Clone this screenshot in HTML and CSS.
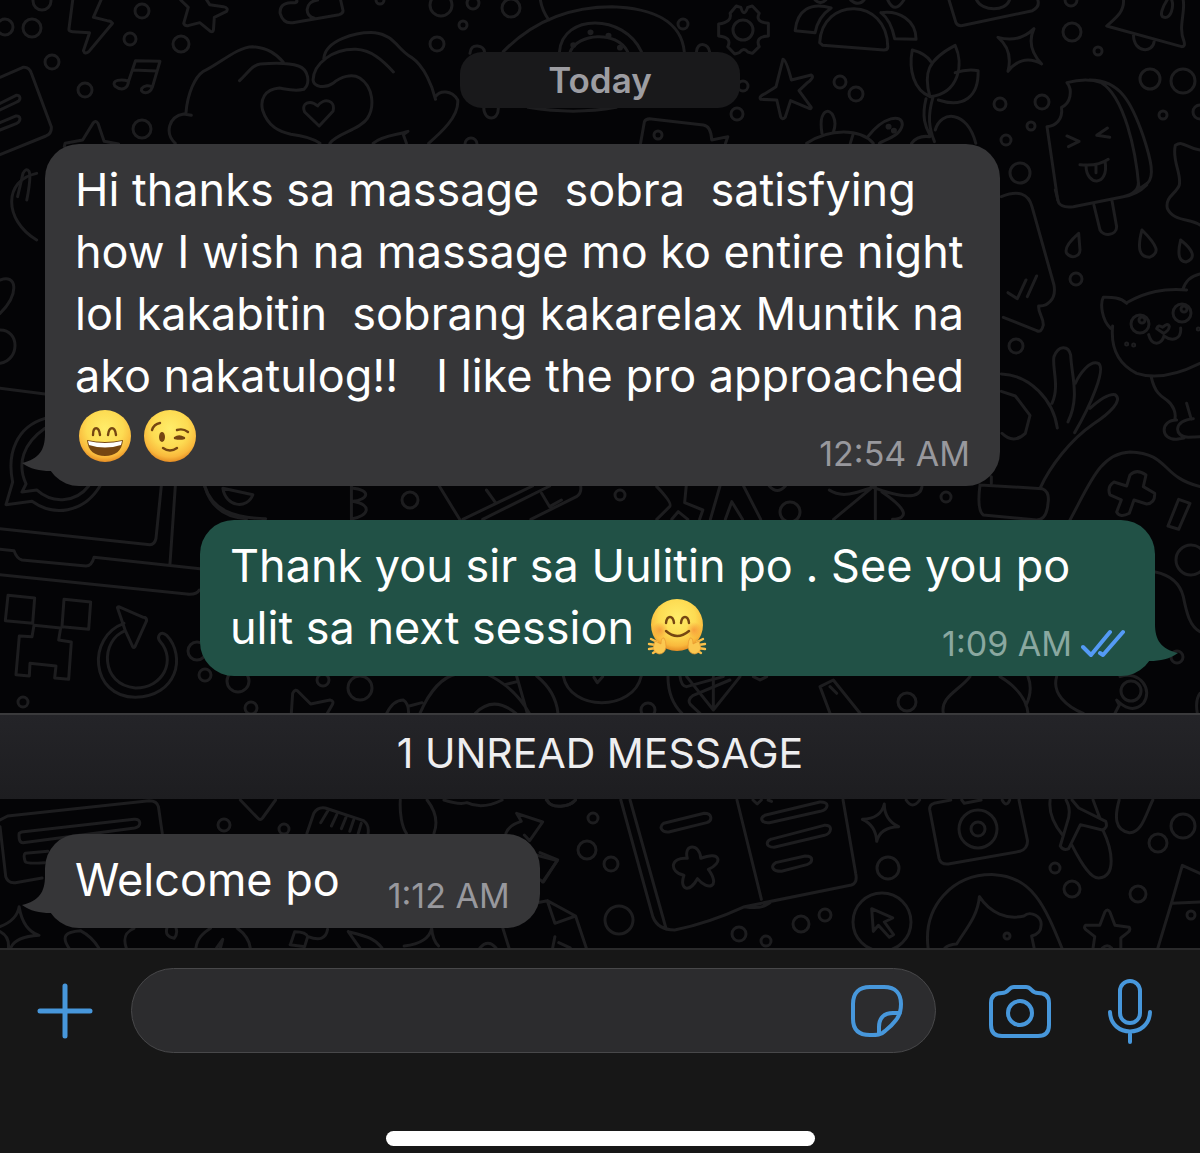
FILE: index.html
```html
<!DOCTYPE html>
<html lang="fil">
<head>
<meta charset="utf-8">
<meta name="viewport" content="width=device-width, initial-scale=1">
<title>Chat</title>
<link rel="stylesheet" href="styles.css">
</head>
<body>
<main class="chat">
  <svg class="wallpaper" viewBox="0 0 1200 948" preserveAspectRatio="xMidYMin slice" aria-hidden="true">
    <!-- bubbles scattered between the drawings -->
    <g>
      <circle cx="42" cy="1" r="9"/><circle cx="5" cy="27" r="8"/><circle cx="32" cy="28" r="9"/><circle cx="142" cy="11" r="7"/><circle cx="130" cy="39" r="6"/><circle cx="181" cy="44" r="8"/><circle cx="52" cy="62" r="7"/><circle cx="85" cy="90" r="7"/><circle cx="142" cy="129" r="9"/><circle cx="380" cy="0" r="4"/><circle cx="441" cy="5" r="11"/><circle cx="473" cy="3" r="6"/><circle cx="511" cy="8" r="9"/><circle cx="463" cy="25" r="4"/><circle cx="437" cy="44" r="7"/><circle cx="471" cy="144" r="6"/>
      <circle cx="683" cy="24" r="5"/><circle cx="743" cy="30" r="10"/><circle cx="743" cy="86" r="5"/><circle cx="737" cy="114" r="6"/><circle cx="840" cy="82" r="6"/><circle cx="856" cy="94" r="7"/><circle cx="658" cy="135" r="4"/><circle cx="1071" cy="0" r="6"/><circle cx="1072" cy="32" r="9"/><circle cx="1098" cy="51" r="4"/><circle cx="1150" cy="79" r="10"/><circle cx="1183" cy="81" r="12"/><circle cx="1000" cy="104" r="6"/><circle cx="1042" cy="102" r="7"/><circle cx="1031" cy="126" r="4"/><circle cx="1006" cy="140" r="5"/><circle cx="1163" cy="115" r="4"/><circle cx="1020" cy="173" r="10"/><circle cx="1200" cy="112" r="7"/>
      <circle cx="1076" cy="279" r="6"/><circle cx="1016" cy="346" r="7"/><circle cx="1140" cy="324" r="9"/><circle cx="1182" cy="313" r="9"/><circle cx="1142" cy="320" r="3"/><circle cx="1184" cy="309" r="3"/>
      <circle cx="23" cy="702" r="5"/><circle cx="197" cy="651" r="9"/><circle cx="205" cy="675" r="6"/><circle cx="238" cy="681" r="11"/><circle cx="251" cy="708" r="6"/><circle cx="323" cy="680" r="6"/><circle cx="360" cy="688" r="12"/><circle cx="648" cy="710" r="7"/>
      <circle cx="410" cy="500" r="8"/><circle cx="620" cy="495" r="5"/><circle cx="790" cy="512" r="10"/><circle cx="946" cy="497" r="5"/><circle cx="1191" cy="560" r="15"/><circle cx="1131" cy="691" r="10"/><circle cx="1177" cy="657" r="6"/><circle cx="907" cy="702" r="9"/>
      <circle cx="224" cy="825" r="6"/><circle cx="284" cy="829" r="5"/><circle cx="593" cy="818" r="5"/><circle cx="587" cy="850" r="9"/><circle cx="611" cy="864" r="7"/><circle cx="619" cy="920" r="14"/><circle cx="739" cy="934" r="7"/><circle cx="766" cy="941" r="5"/><circle cx="801" cy="924" r="8"/><circle cx="825" cy="915" r="6"/><circle cx="888" cy="868" r="11"/><circle cx="882" cy="922" r="29"/><circle cx="978" cy="829" r="19"/><circle cx="978" cy="829" r="7"/><circle cx="1055" cy="868" r="5"/><circle cx="1072" cy="889" r="8"/><circle cx="1138" cy="894" r="8"/><circle cx="1158" cy="843" r="9"/><circle cx="1183" cy="826" r="12"/><circle cx="1007" cy="936" r="3"/><circle cx="1191" cy="915" r="4"/>
    </g>
    <!-- bolt, star, notes, hands with heart, saucer -->
    <g transform="scale(.3827 .3333)">
      <path d="M190 0L180 88Q180 95 190 95L234 98L218 152Q222 165 232 155L294 70Q290 62 280 62L244 52L264 0"/>
      <path d="M472 0L492 22L480 70Q484 80 494 76L522 68L550 94Q558 98 558 86L560 52L592 34Q598 24 584 20L548 14L540 0"/>
      <path d="M775 0Q780 10 760 8Q730 10 732 40Q740 72 765 68L886 44Q898 40 896 30L890 0M830 0C795 5 795 50 822 55"/>
      <path d="M336 244C318 236 290 240 300 258C320 276 334 264 336 244L354 182L418 184L398 262C390 286 366 280 370 266C376 256 390 254 398 262M346 210L410 213"/>
      <path d="M0 232L60 202Q76 200 82 220L134 380Q136 400 120 408L0 464M0 310L42 286C54 284 56 300 44 306L0 330M0 368L42 348C54 346 56 362 44 370L0 390M168 440L170 430L216 420L244 368Q250 360 256 370L272 424L310 432M46 590L60 520Q68 502 76 514Q82 530 70 600"/>
      <path d="M458 430C430 400 440 350 480 342L500 346M486 338C490 280 510 230 530 215C570 195 620 140 660 140C700 144 720 160 740 186M626 242C650 215 660 195 680 192C720 188 760 190 780 198C806 208 812 250 794 268C770 275 750 268 730 264C690 268 680 300 686 330C700 380 730 395 760 403Q810 410 836 430M846 176C850 120 930 95 980 98C1030 105 1040 150 1075 172C1110 200 1130 260 1138 298M1138 290C1150 270 1180 270 1196 300C1200 350 1150 400 1120 430M1028 216C1000 180 970 150 930 148C870 146 820 190 818 240C820 262 850 266 870 250C890 230 920 220 940 234C975 260 980 320 960 355C940 390 880 400 862 430M975 430C1000 405 1040 405 1066 394L1054 404L1062 430M834 378L796 336C786 310 810 298 830 318C846 292 878 300 870 334Z"/>
      <path d="M1315 155C1370 90 1460 20 1600 20C1700 24 1780 60 1788 155M1412 0Q1416 30 1434 60M1462 155C1470 40 1630 40 1676 155M1490 155C1510 100 1610 90 1640 155M1228 160Q1230 136 1248 138Q1264 140 1266 155M1820 155Q1822 132 1838 134Q1852 138 1854 155M1264 322C1264 365 1304 365 1302 322M1380 322Q1500 345 1610 322"/>
      <circle cx="1498" cy="135" r="4"/><circle cx="1543" cy="97" r="4"/><circle cx="1590" cy="107" r="4"/><circle cx="1620" cy="143" r="4"/>
    </g>
    <!-- cog, sunrise, starfish, tulip, sparkle, bell, ice lolly -->
    <g transform="translate(600 0) scale(.3827 .3333)">
      <path d="M340 40L356 18L368 22Q376 54 386 22L398 18L416 40Q404 66 440 70V108Q404 110 416 140L398 160L386 156Q376 140 364 158L352 162L334 140Q346 112 310 108V72Q346 66 340 40Z"/>
      <path d="M574 128C580 -10 750 -10 752 140Q752 150 742 150L582 136ZM510 92C515 30 550 5 604 24Q570 50 562 98ZM734 38C780 30 826 60 826 118L770 116Q760 60 734 38M562 0Q576 16 590 0M655 0Q675 20 690 0M752 0Q770 44 794 0"/>
      <path d="M478 178Q486 178 500 240L552 225Q562 232 540 250L520 272L552 322Q552 330 540 322L498 302L484 352Q476 362 472 350L462 300L420 298Q414 290 430 282L460 260Z"/>
      <path d="M862 290C820 270 806 210 816 150Q850 160 864 184M862 290C845 220 855 180 928 136C950 190 940 280 862 290M928 218Q960 206 988 212C990 290 950 325 884 300M852 296C840 350 850 380 862 405M870 292C855 350 860 385 874 425M876 390C890 330 960 330 982 430M814 430Q830 405 862 410"/>
      <path d="M1040 112Q1094 130 1134 86Q1112 140 1154 192Q1104 160 1066 214Q1080 150 1040 112Z"/>
      <path d="M1368 0C1370 40 1340 60 1324 78L1520 140Q1530 140 1526 124C1510 80 1530 40 1524 0M1482 0C1470 20 1460 50 1474 52C1492 56 1500 20 1494 0M1394 106C1395 160 1445 160 1448 124M912 0L930 68Q935 80 950 76L1130 32Q1150 20 1144 0M984 0C1000 35 1060 35 1070 0"/>
      <path d="M106 430L116 365Q120 355 134 357L270 375Q290 378 292 420L334 410L328 430M580 400C570 330 600 320 610 350Q618 370 610 396M700 410C740 350 790 340 790 374C785 410 740 420 730 430M540 430C600 385 680 385 714 430M662 400L654 430"/>
      <path d="M1196 600L1168 380C1190 378 1210 360 1206 322C1230 310 1236 270 1220 248C1260 236 1290 240 1310 248C1370 290 1400 450 1408 560M1280 240C1360 240 1390 310 1420 410C1440 480 1450 530 1430 550L1408 568M1220 408L1252 424L1224 440M1326 384L1298 406L1332 412M1254 494Q1300 500 1328 478M1270 496C1270 560 1330 560 1320 486M1296 496V518"/>
      <circle cx="754" cy="380" r="4"/><circle cx="768" cy="392" r="4"/>
    </g>
    <!-- lolly stick, drops, kitten, hand, gamepad -->
    <g transform="translate(980 100) scale(.3333)">
      <path d="M226 270L236 308Q244 324 280 320L430 290Q475 280 475 250M430 290Q470 285 500 255M342 316L360 390C370 410 410 408 410 380L396 302M296 400Q250 440 260 460C275 478 300 470 300 450ZM486 390C470 450 480 470 508 472C540 460 536 440 486 390M602 420C590 470 600 484 618 486C650 475 640 450 602 420M660 150C620 145 610 120 586 136C575 180 605 220 598 255C590 280 555 290 562 325C580 365 630 355 660 375"/>
      <path d="M64 290Q140 260 156 320L222 555C230 600 200 620 176 618C174 640 190 650 190 675Q184 700 170 692L70 652M84 578L112 596L138 540M170 528L142 590"/>
      <path d="M444 606C500 575 550 565 620 570M608 570Q620 530 660 522M440 610C420 590 390 592 370 592C360 610 365 660 392 685M398 678C390 760 430 800 470 820C530 840 600 820 660 790M530 686Q534 672 548 682Q564 666 568 680Q566 694 550 700ZM506 704C515 740 545 735 552 708C575 725 605 720 602 684M514 832C525 880 545 890 560 900C580 915 590 940 584 960M620 910L634 958M590 960C540 960 540 1020 590 1018L612 1014M640 956C580 960 580 1010 625 1012L660 1010"/>
      <path d="M64 822C150 825 220 900 232 984M216 910C240 860 215 800 222 770C235 735 265 735 272 765C275 830 300 890 264 966M286 850C300 820 330 780 355 790C380 805 330 920 284 998M330 925Q380 880 405 884C430 900 390 940 340 972C270 1020 210 1100 180 1165M64 874L106 888L150 946L136 1000Q100 1034 66 1000M34 1130V1150M0 1155L186 1166Q210 1175 204 1210Q200 1260 170 1260L10 1245Q-10 1230 0 1155"/>
      <path d="M270 1260C330 1150 360 1060 450 1056C570 1060 540 1130 660 1160M450 1125Q470 1105 498 1125L490 1160L524 1180Q526 1210 500 1212L462 1200L448 1240Q420 1255 410 1236L424 1200L390 1185Q380 1160 402 1146L440 1158ZM596 1198L630 1210L596 1288L564 1278Z"/>
      <circle cx="440" cy="732" r="3"/><circle cx="461" cy="735" r="3"/><circle cx="655" cy="687" r="3"/>
    </g>
    <!-- laptop, pixel face, reload arrow -->
    <g transform="translate(0 380) scale(.3333)">
      <path d="M0 25L135 42M135 115C50 140 20 220 38 306L18 374L96 364C160 410 250 400 300 318M135 145C70 190 50 250 78 312L66 336L110 330C160 375 230 365 266 318M484 318L468 475Q464 494 450 494L0 446M526 318L510 552M0 508L42 512Q50 536 66 540L258 558Q275 558 282 532L600 566M0 584L560 642Q590 645 598 630M614 318Q640 410 740 416"/>
      <path d="M24 646L104 654L98 730L16 722ZM192 658L272 666L266 748L186 740ZM102 736L182 744L176 780L214 786L206 898L164 894L168 858L90 850L88 888L48 884L58 768L96 770Z"/>
      <path d="M376 752L398 800Q402 806 406 798L440 722Q440 712 430 712L356 680Q350 680 354 688L376 752M372 730C260 770 270 950 406 952C530 950 560 830 500 766C480 750 470 770 480 784C530 840 490 925 406 924C300 915 300 780 376 752"/>
      <path d="M110 -620C10 -600 10 -480 110 -420M0 -300C50 -320 60 -260 0 -200M0 -150C60 -150 60 -60 0 -50"/>
    </g>
    <!-- between the two large messages -->
    <g transform="translate(180 460) scale(.5357 .3333)">
      <path d="M80 85L136 104C125 150 85 140 80 85M46 78C60 150 100 175 160 176M320 78V178M320 84C360 90 350 120 322 124C362 134 350 170 322 176M484 78L522 178M528 178L658 78M565 178L690 78M572 90L590 130M675 100L690 140L712 120M655 178L740 110Q750 100 748 78M890 80Q920 130 914 140L890 178M945 78L942 128L976 150L970 178M918 178L930 155L948 178M1008 78L990 178M1052 78L1084 178M1018 178L1030 125L1050 178M1100 78Q1115 105 1130 78M1212 90C1240 120 1270 90 1290 85L1220 178M1298 78V178M1290 80Q1380 135 1385 80M1310 95C1360 150 1360 175 1330 178"/>
    </g>
    <g transform="translate(900 480) scale(.3333)">
      <path d="M766 276C810 285 840 310 850 350C860 400 870 440 900 455M130 700C120 650 180 630 210 590M300 590C350 620 380 660 384 700M384 590Q400 630 378 676M470 590C455 640 500 680 550 700M660 590C720 570 760 630 730 670C700 700 670 680 650 660L658 675L645 700M900 640Q885 660 892 700"/>
      <path d="M-640 590L-560 690L-480 590M-560 590V690M-440 590L-420 600L-400 590M-240 620L-200 600L-120 700M-240 620L-210 700M-210 620L-190 640"/>
    </g>
    <!-- star, gauge, wheel above the divider -->
    <g transform="translate(190 670) scale(.3333)">
      <path d="M304 130L308 70Q316 54 326 66L362 102L420 90Q434 92 426 106L412 130M590 130Q610 90 640 90Q656 100 656 130M658 108L696 98M690 130C720 60 760 20 800 12M890 12C950 40 990 80 1018 130M980 18L1012 130M945 44L985 34M1040 18C1080 50 1100 90 1104 130M856 130Q910 75 978 130M1120 18C1140 125 1330 125 1354 18M1212 22L1222 38L1238 20M1434 18C1434 70 1450 105 1476 130M1470 18Q1474 50 1490 50L1600 20M1620 30L1510 76Q1490 90 1502 104L1530 130"/>
    </g>
    <!-- card, comb, ribbon, arrows, paper -->
    <g transform="translate(0 790) scale(.3827 .3333)">
      <path d="M0 90L20 78L390 32Q410 32 414 50L424 130M0 110L15 260Q20 280 40 278L110 264M56 126L350 88C370 85 370 110 352 114L60 158Q48 158 50 130ZM125 184L66 190Q60 195 66 215Q70 222 116 218M628 30L674 85Q680 92 686 84L720 30M802 130L820 70Q830 50 850 54L950 92Q965 105 962 130M856 64L838 98M880 74L866 108M904 82L892 116M924 90L914 124M944 100L936 130M1046 30C1044 70 1050 110 1062 130M1116 30Q1150 80 1134 130M1160 30Q1200 45 1220 38Q1260 60 1312 30M1430 30C1440 60 1490 50 1504 30M1322 130Q1330 105 1362 94L1350 70L1418 96L1384 152L1370 135M1400 195L1456 212L1420 276L1400 262"/>
      <path d="M0 410Q45 390 50 350Q60 420 102 436Q40 440 28 474M0 425Q25 440 22 474M180 474C160 440 170 425 210 422Q240 440 258 474M330 474C320 440 330 425 350 415M436 415Q430 440 455 445Q465 430 460 415M512 474C515 445 530 430 550 415M620 415Q650 440 654 474M566 474L582 448L576 474M760 460L770 425Q800 425 804 440L796 470L758 464M805 440Q850 460 856 418M910 425L940 474M910 425C960 440 980 445 998 474M1056 468Q1120 460 1128 415Q1130 450 1146 468M1254 474Q1275 445 1296 474M1314 415L1330 474M1404 338L1430 332L1504 378L1532 474M1430 332L1450 400L1504 378M1450 440L1444 474M1460 458L1490 474"/>
    </g>
    <!-- notebook, camera, carrot, girl, star -->
    <g transform="translate(540 790) scale(.4209 .3333)">
      <path d="M192 30L268 380Q280 420 320 420Q400 400 486 350L740 285Q755 278 750 250L720 30M214 30L300 418M468 30L526 328M486 350Q530 360 550 334M294 100L390 70C410 70 410 92 396 98L306 126C288 128 282 110 294 100M534 76L665 36C690 35 685 58 666 64L545 98C525 100 522 84 534 76M548 148L675 106C698 104 692 130 676 136L556 172C534 170 538 154 548 148M560 218L630 198C652 198 648 218 634 224L574 244C550 244 548 228 560 218M506 30L516 42L526 30M542 30L550 34"/>
      <path d="M350 205C340 160 380 160 382 205C430 180 435 220 400 238C430 290 400 305 374 266C355 310 330 300 342 256C305 245 310 200 350 205M818 42Q818 90 852 110Q808 112 800 154Q798 106 766 88Q810 86 818 42Z"/>
      <path d="M976 30L936 40Q924 45 926 60L948 205Q952 224 970 222L1140 184Q1160 176 1158 150L1138 30M1002 30L1008 40L1048 30M1098 30Q1108 54 1116 30M870 30Q885 60 902 30M1212 30C1208 70 1225 110 1242 136M1250 30Q1264 60 1252 100L1236 168Q1244 184 1256 176L1284 104L1336 120Q1350 114 1344 94L1280 54L1264 30M1314 30L1330 84M1264 166C1290 230 1310 266 1328 264C1370 260 1360 180 1338 122M1376 30C1365 80 1365 120 1400 128C1430 130 1440 70 1456 30M15 30C30 60 70 50 84 30"/>
      <path d="M788 356L838 384L818 396L840 434L830 442L804 406L792 424ZM922 474C910 350 980 250 1080 254C1170 260 1200 350 1240 474M1044 320C1040 380 1010 420 990 462Q970 464 962 474M1044 320C1070 370 1110 390 1150 378C1165 360 1195 380 1190 410Q1190 430 1168 438L1174 474M1342 366L1330 406L1296 406Q1290 414 1300 422L1318 440L1314 474M1354 366L1366 406L1400 412Q1404 420 1396 428L1380 444V474M1342 366Q1348 354 1354 366M1336 474Q1348 460 1358 474M1568 250L1526 226L1500 340L1468 474M1502 340L1568 336M0 188L42 210L6 276"/>
    </g>
  </svg>

  <p class="date">Today</p>

  <article class="bubble bubble-in bubble-long">
    <svg class="tail" viewBox="0 0 36 52" aria-hidden="true"><path d="M24 0C24 16 18 25 1 29C9 35 19 37 29 37L36 37V0Z"/></svg>
    <p class="text">Hi thanks sa massage&nbsp; sobra&nbsp; satisfying how I wish na massage mo ko entire night lol kakabitin&nbsp; sobrang kakarelax Muntik na ako nakatulog!!&nbsp;&nbsp; I like the pro approached <svg class="emoji" viewBox="0 0 60 60" role="img" aria-label="Grinning face with smiling eyes">
        <defs>
          <radialGradient id="face" cx=".5" cy=".36" r=".64"><stop offset="0" stop-color="#ffed6a"/><stop offset=".55" stop-color="#fddb52"/><stop offset=".85" stop-color="#f9b83c"/><stop offset="1" stop-color="#e58d24"/></radialGradient>
          <radialGradient id="blush"><stop offset="0" stop-color="#f58a35" stop-opacity=".7"/><stop offset="1" stop-color="#f58a35" stop-opacity="0"/></radialGradient>
        </defs>
        <circle cx="30" cy="30" r="26" fill="url(#face)"/>
        <path d="M18 29C18 20 24 20 25 29M33 29C34 20 40 20 41 29" fill="none" stroke="#754612" stroke-width="2.4" stroke-linecap="round"/>
        <path d="M12 34Q30 38 48 34C47 45 40 50 30 50C20 50 13 45 12 34Z" fill="#754612"/>
        <path d="M13 35Q30 39 47 35L46 39Q30 44 14 39Z" fill="#fff"/>
      </svg><svg class="emoji" viewBox="0 0 60 60" role="img" aria-label="Winking face">
        <circle cx="30" cy="30" r="26" fill="url(#face)"/>
        <path d="M12 24Q14 18 20 17M37 24Q43 22 48 26M35 32Q39 29 44 32M35 32Q40 33 44 32M23 42Q30 47 37 42" fill="none" stroke="#754612" stroke-width="2.4" stroke-linecap="round"/>
        <ellipse cx="22" cy="31" rx="3" ry="5" fill="#754612"/>
      </svg><time class="time">12:54 AM</time></p>
  </article>

  <article class="bubble bubble-out bubble-long">
    <p class="text">Thank you sir sa Uulitin po . See you po ulit sa next session <svg class="emoji" viewBox="0 0 60 60" role="img" aria-label="Hugging face">
        <circle cx="30" cy="29" r="26" fill="url(#face)"/>
        <circle cx="13" cy="34" r="8" fill="url(#blush)"/><circle cx="47" cy="34" r="8" fill="url(#blush)"/>
        <path d="M19 27C20 19 26 19 27 27M34 27C35 19 41 19 42 27M19 35Q30 45 42 35" fill="none" stroke="#754612" stroke-width="2.4" stroke-linecap="round"/>
        <path d="M4 43L10 46M2 48L9 49M2 53L9 52M6 57L11 54M56 43L50 46M58 48L51 49M58 53L51 52M54 57L49 54" stroke="#fbc04a" stroke-width="2.4" stroke-linecap="round"/>
        <path d="M8 45L14 48Q14 41 17 42Q19 44 19 51Q18 58 12 58Q7 57 6 52ZM52 45L46 48Q46 41 43 42Q41 44 41 51Q42 58 48 58Q53 57 54 52Z" fill="#fbc850" stroke="#e99a30" stroke-width=".7"/>
      </svg><span class="time"><time>1:09 AM</time><svg class="ticks" viewBox="0 0 44 30" role="img" aria-label="Read"><path d="M2 18L10 26L29 3M19 24L22 26L42 3"/></svg></span></p>
    <svg class="tail" viewBox="0 0 36 52" aria-hidden="true"><path d="M24 0C24 16 18 25 1 29C9 35 19 37 29 37L36 37V0Z"/></svg>
  </article>

  <h2 class="unread">1 UNREAD MESSAGE</h2>

  <article class="bubble bubble-in">
    <svg class="tail" viewBox="0 0 36 52" aria-hidden="true"><path d="M24 0C24 16 18 25 1 29C9 35 19 37 29 37L36 37V0Z"/></svg>
    <p class="text">Welcome po<time class="time">1:12 AM</time></p>
  </article>
</main>

<footer class="composer">
  <form class="bar">
    <button class="icon" type="button" aria-label="Add attachment"><svg width="56" height="56" viewBox="0 0 56 56"><path d="M28 3V53M3 28H53" stroke-width="5"/></svg></button>
    <div class="field">
      <input class="input" type="text" aria-label="Message">
      <button class="icon" type="button" aria-label="Stickers"><svg width="54" height="54" viewBox="0 0 54 54"><path d="M20 3H34C46 3 51 10 51 20C51 27 50 31 46 36C43 40 39 44 35 47C31 51 27 51 20 51C9 51 3 46 3 35V20C3 9 9 3 20 3ZM29 50V43C29 34 34 29 43 29H50"/></svg></button>
    </div>
    <button class="icon camera" type="button" aria-label="Camera"><svg width="64" height="56" viewBox="0 0 64 56"><path d="M26 4H38C44 4 43 10 50 10C57 10 61 13 61 20V42C61 50 57 53 50 53H14C7 53 3 50 3 42V20C3 13 7 10 14 10C21 10 20 4 26 4Z"/><circle cx="32" cy="30" r="12"/></svg></button>
    <button class="icon" type="button" aria-label="Voice message"><svg width="46" height="66" viewBox="0 0 46 66"><rect x="13" y="3" width="20" height="42" rx="10"/><path d="M3 34C4 60 42 60 43 34M23 54V64"/></svg></button>
  </form>
  <div class="home"></div>
</footer>
</body>
</html>
```
FILE: styles.css
```css
* {
  box-sizing: border-box;
}

body {
  margin: 0;
  min-height: 100vh;
  display: flex;
  flex-direction: column;
  background: #171717;
  color: #fff;
  font-family: Inter, "Liberation Sans", sans-serif;
}

p,
h2 {
  margin: 0;
}

.chat {
  position: relative;
  isolation: isolate;
  flex: 1;
  display: flex;
  flex-direction: column;
  align-items: flex-start;
  padding: 52px 0 20px;
  background: #040406;
  overflow: hidden;
}

.wallpaper {
  position: absolute;
  inset: 0;
  z-index: -1;
  width: 100%;
  height: 100%;
  fill: none;
  stroke: #1d1d1f;
  stroke-width: 3;
  stroke-linecap: round;
  stroke-linejoin: round;
}

.wallpaper * {
  vector-effect: non-scaling-stroke;
}

.date {
  align-self: center;
  padding: 0 88px;
  border-radius: 22px;
  background: #19191b;
  color: #9d9da2;
  font-size: 35px;
  font-weight: 600;
  line-height: 56px;
}

.bubble {
  position: relative;
  padding: 15px 30px 16px;
  border-radius: 34px;
}

.bubble-long {
  width: calc(100% - 90px);
  max-width: 955px;
}

.bubble-in {
  margin: 36px 45px 0;
  background: #363638;
  fill: #363638;
}

.bubble-out {
  align-self: flex-end;
  margin: 34px 45px 0;
  background: #215146;
  fill: #215146;
}

.tail {
  position: absolute;
  bottom: 0;
  left: -24px;
  width: 36px;
  height: 52px;
}

.bubble-out .tail {
  right: -24px;
  left: auto;
  transform: scaleX(-1);
}

.text {
  display: flow-root;
  font-size: 45px;
  line-height: 62px;
}

.emoji {
  width: 60px;
  height: 60px;
  margin: -4px 5px -4px 0;
  vertical-align: -8px;
}

.time {
  float: right;
  display: flex;
  align-items: center;
  gap: 9px;
  margin-top: 31px;
  margin-left: 48px;
  color: #98989d;
  font-size: 34px;
  line-height: 32px;
}

.time time {
  display: block;
}

.bubble-out .time {
  color: #8aa8a0;
}

.ticks {
  width: 44px;
  height: 30px;
  fill: none;
  stroke: #549af5;
  stroke-width: 4;
  stroke-linecap: round;
  stroke-linejoin: round;
}

.unread {
  align-self: stretch;
  margin-top: 37px;
  padding-bottom: 8px;
  border-top: 2px solid #3a3a3c;
  background: linear-gradient(#242428, #1d1d20);
  color: #eeeef0;
  font-size: 41px;
  font-weight: 400;
  line-height: 76px;
  text-align: center;
}

.unread + .bubble {
  margin-top: 35px;
}

.composer {
  display: flex;
  flex-direction: column;
  align-items: center;
  border-top: 2px solid #2a2a2b;
  background: #171717;
}

.bar {
  display: flex;
  align-items: center;
  width: 100%;
  padding: 18px 47px 78px 37px;
}

.icon {
  display: flex;
  flex: none;
  padding: 0;
  border: 0;
  background: none;
}

.icon svg {
  fill: none;
  stroke: #4797db;
  stroke-width: 4;
  stroke-linecap: round;
  stroke-linejoin: round;
}

.field {
  flex: 1;
  display: flex;
  align-items: center;
  min-width: 0;
  height: 85px;
  margin: 0 52px 0 38px;
  padding: 0 31px 0 40px;
  border: 1px solid #48484a;
  border-radius: 43px;
  background: #2c2c2e;
}

.input {
  flex: 1;
  min-width: 0;
  border: 0;
  outline: 0;
  background: none;
  color: #fff;
  font: inherit;
  font-size: 45px;
}

.camera {
  margin-right: 55px;
}

.home {
  width: 429px;
  max-width: 60%;
  height: 15px;
  margin-bottom: 7px;
  border-radius: 8px;
  background: #fff;
}
```
